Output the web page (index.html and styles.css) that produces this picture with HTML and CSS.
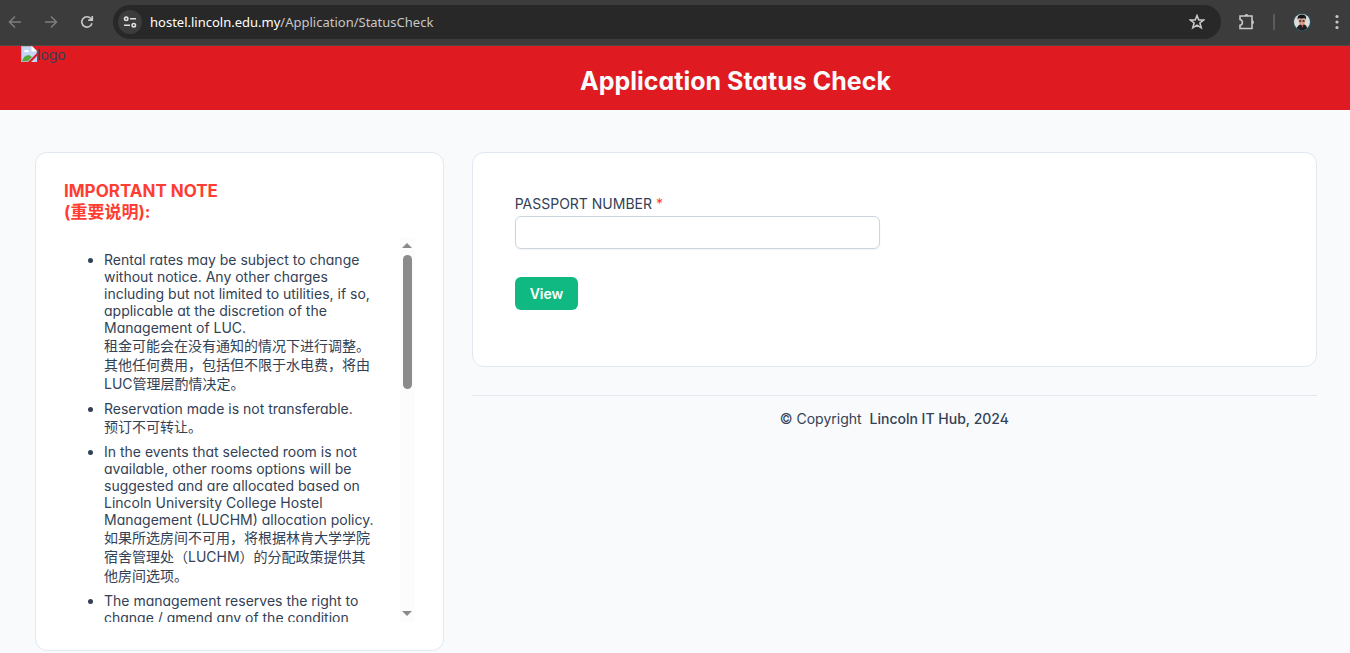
FILE: index.html
```
<!DOCTYPE html>
<html lang="en">
<head>
<meta charset="utf-8">
<title>Application Status Check</title>
<meta name="viewport" content="width=device-width, initial-scale=1">
<link rel="stylesheet" href="styles.css">
</head>
<body>

<!-- browser bar -->
<div class="browser">
  <button class="nav off" type="button" aria-label="Back">
    <svg width="16" height="16" viewBox="0 0 16 16"><path d="M14 8H3M8 2.5L2.5 8L8 13.5"/></svg>
  </button>
  <button class="nav off" type="button" aria-label="Forward">
    <svg width="16" height="16" viewBox="0 0 16 16"><path d="M2 8H13M8 2.5L13.5 8L8 13.5"/></svg>
  </button>
  <button class="nav" type="button" aria-label="Reload">
    <svg width="16" height="16" viewBox="0 0 16 16"><path d="M13 9.2A5.2 5.2 0 1 1 12 4.6L13 5.8M13.3 2V6.1H9.2"/></svg>
  </button>
  <div class="omnibox">
    <button class="site" type="button" aria-label="Site information">
      <svg width="14" height="14" viewBox="0 0 14 14"><circle cx="3.2" cy="3.8" r="1.7"/><path d="M7 3.8H13M1 10.2H7"/><circle cx="10.8" cy="10.2" r="1.7"/></svg>
    </button>
    <div class="url" role="textbox" contenteditable="true" spellcheck="false" aria-label="Address"><span class="host">hostel.lincoln.edu.my</span>/Application/StatusCheck</div>
    <button class="nav" type="button" aria-label="Bookmark">
      <svg width="16" height="16" viewBox="0 0 16 16"><path d="M8 1.6L9.8 6H14.6L10.9 9L12.2 13.8L8 11.1L3.8 13.8L5.1 9L1.4 6H6.2Z"/></svg>
    </button>
  </div>
  <div class="tools">
    <button class="nav" type="button" aria-label="Extensions">
      <svg width="18" height="18" viewBox="0 0 18 18"><path d="M2 3H14V15.500H2V12.300C5.200 11.800 5.200 7.200 2 6.500Z"/><path class="fill" d="M6.500 3A2 2 0 0 1 10.500 3ZM14 7.300A2 2 0 0 1 14 11.300Z"/></svg>
    </button>
    <span class="split"></span>
    <button class="nav" type="button" aria-label="Profile">
      <svg class="avatar" width="20" height="20" viewBox="0 0 20 20">
        <circle cx="10" cy="10" r="9.5" fill="#2f4a50"/>
        <circle cx="10" cy="10" r="8" fill="#dcdcdc"/>
        <path d="M4.500 16L7 13L9 12H11L13.500 13L15.500 16A8 8 0 0 1 4.500 16Z" fill="#1d1f26"/>
        <path d="M9 12H11.5L10.5 16Z" fill="#c1584a"/>
        <path d="M6.6 7H13.2V9.5Q12.6 13 10 13Q7.2 13 6.6 9.5Z" fill="#d99b83"/>
        <path d="M5.6 7.500Q4.8 3 9.6 2.5Q15 2.6 14 7.500L12.8 6.2L9 6.800L6.8 6.2Z" fill="#17151a"/>
        <path d="M7.3 9H9.2M10.6 9H12.5" stroke="#2b2022"/>
      </svg>
    </button>
    <button class="nav" type="button" aria-label="Menu">
      <svg width="16" height="16" viewBox="0 0 16 16"><g class="fill"><circle cx="8" cy="2.5" r="1.6"/><circle cx="8" cy="8" r="1.6"/><circle cx="8" cy="13.5" r="1.6"/></g></svg>
    </button>
  </div>
</div>

<header class="topbar">
  <div class="logo">
    <svg width="16" height="16" viewBox="0 0 16 16">
      <path d="M0 0H11L16 5V7L7 16H0Z" fill="#c4d5f5"/>
      <path d="M1 15Q3 9 8 9L11 11L7 15Z" fill="#55ab35"/>
      <path d="M3 6Q3 4 5 4Q7 3 8 6Z" fill="#fff"/>
      <path d="M7 15.5H.5V.5H11L15.5 5V7" fill="none" stroke="#b4b4b8"/>
      <path d="M10.5 0V5.5H16Z" fill="#fff"/>
      <path d="M16 10V16H10Z" fill="#c4d5f5"/>
    </svg><span>logo</span>
  </div>
  <h1>Application Status Check</h1>
</header>

<div class="layout">
  <aside class="card note">
    <h2>IMPORTANT NOTE<br>(重要说明):</h2>
    <div class="scroller">
      <ul>
        <li>Rental rates may be subject to change without notice. Any other charges including but not limited to utilities, if so, applicable at the discretion of the Management of LUC.
          <span class="cn" lang="zh">租金可能会在没有通知的情况下进行调整。其他任何费用，包括但不限于水电费，将由LUC管理层酌情决定。</span></li>
        <li>Reservation made is not transferable.
          <span class="cn" lang="zh">预订不可转让。</span></li>
        <li>In the events that selected room is not available, other rooms options will be suggested and are allocated based on Lincoln University College Hostel Management (LUCHM) allocation policy.
          <span class="cn" lang="zh">如果所选房间不可用，将根据林肯大学学院宿舍管理处（LUCHM）的分配政策提供其他房间选项。</span></li>
        <li>The management reserves the right to change / amend any of the condition</li>
      </ul>
      <div class="bar" aria-hidden="true">
        <span class="up"></span>
        <span class="thumb"></span>
        <span class="down"></span>
      </div>
    </div>
  </aside>

  <main>
    <form class="card form" onsubmit="return false">
      <div class="field">
        <label for="passport">PASSPORT NUMBER <span class="req">*</span></label>
        <input type="text" id="passport" name="passport">
      </div>
      <button class="btn" type="submit">View</button>
    </form>
    <footer>© Copyright <strong>Lincoln IT Hub, 2024</strong></footer>
  </main>
</div>

</body>
</html>
```
FILE: styles.css
```
* {
	box-sizing: border-box;
}

body {
	margin: 0;
	background: #f8fafc;
	color: #334155;
	font: 14px/17px Inter, "Noto Sans CJK SC", sans-serif;
	font-feature-settings: "cv02", "cv03", "cv04", "cv11";
}

button {
	border: 0;
	padding: 0;
	font: inherit;
	cursor: pointer;
}

/* browser bar */
.browser {
	display: flex;
	align-items: center;
	height: 46px;
	padding: 0 5px 2px 7px;
	background: #3c3c3c;
	border-bottom: 1px solid #4a4a4a;
}

.nav {
	display: flex;
	margin-right: 20px;
	background: none;
	color: #c7c7c7;
}

.nav svg, .site svg {
	fill: none;
	stroke: currentColor;
	stroke-width: 1.6;
}

.nav svg .fill {
	fill: currentColor;
	stroke: none;
}

.nav .avatar {
	stroke: none;
}

.off {
	color: #7c7c7c;
}

.omnibox {
	flex: 1;
	display: flex;
	align-items: center;
	height: 34px;
	margin-left: -2px;
	padding: 0 16px 0 5px;
	border-radius: 17px;
	background: #282828;
}

.omnibox .nav {
	margin: 0;
}

.site {
	display: flex;
	align-items: center;
	justify-content: center;
	width: 24px;
	height: 24px;
	margin-right: 8px;
	border-radius: 50%;
	background: #3c3c3c;
	color: #dedede;
}

.url {
	flex: 1;
	color: #c7c7c7;
	font: 13px/18px "Noto Sans", sans-serif;
	outline: none;
}

.host {
	color: #fff;
}

.tools {
	display: flex;
	align-items: center;
	gap: 17px;
	margin-left: 17px;
}

.tools .nav {
	margin: 0;
}

.split {
	width: 2px;
	height: 16px;
	background: #5c5c5c;
}

/* page header */
.topbar {
	display: flex;
	height: 64px;
	padding-left: 21px;
	background: #df1b21;
}

.logo {
	display: flex;
	width: 100px;
}

.topbar h1 {
	flex: 1;
	margin: 0;
	padding-top: 19px;
	color: #f8fafc;
	font-size: 25px;
	font-weight: 700;
	line-height: 32px;
	text-align: center;
}

.layout {
	display: grid;
	grid-template-columns: repeat(12, 1fr);
	gap: 28px;
	align-items: start;
	padding: 42px 33px 0 35px;
}

.card {
	border: 1px solid #e2e8f0;
	border-radius: 12px;
	background: #fff;
}

/* important note */
.note {
	grid-column: span 4;
	padding: 28px;
}

.note h2 {
	margin: 0 0 14px;
	color: #ff3d32;
	font-size: 17px;
	font-weight: 700;
	line-height: 21px;
}

.scroller {
	display: flex;
	height: 385px;
	overflow: hidden;
}

.scroller ul {
	flex: 1;
	margin: 14px 0;
	padding: 0 24px 0 40px;
}

.scroller li {
	margin-bottom: 7px;
}

.cn {
	display: block;
	line-height: 19px;
}

.bar {
	display: flex;
	flex-direction: column;
	align-items: center;
	width: 15px;
	padding: 6px 0;
	background: #fcfcfc;
}

.up, .down {
	border: 5px solid transparent;
}

.up {
	border-top: 0;
	border-bottom-color: #8b8b8b;
}

.down {
	margin-top: auto;
	border-bottom: 0;
	border-top-color: #8b8b8b;
}

.thumb {
	width: 9px;
	height: 134px;
	margin-top: 7px;
	border-radius: 5px;
	background: #8b8b8b;
}

/* status form */
main {
	grid-column: span 8;
}

.form {
	padding: 42px 42px 56px;
}

.field {
	display: flex;
	flex-direction: column;
	gap: 4px;
	width: calc(50% - 14px);
	margin-bottom: 28px;
}

.req {
	color: #ff3d32;
}

.field input {
	height: 33px;
	padding: 7px 10px;
	border: 1px solid #cbd5e1;
	border-radius: 6px;
	background: #fff;
	color: inherit;
	font: inherit;
	box-shadow: 0 1px 2px rgba(18, 18, 23, 0.05);
}

.btn {
	display: block;
	height: 33px;
	padding: 0 15px;
	border-radius: 6px;
	background: #10b981;
	color: #fff;
	font-weight: 600;
}

footer {
	margin-top: 28px;
	padding-top: 14px;
	border-top: 1px solid #e2e8f0;
	text-align: center;
}

footer strong {
	margin-left: 4px;
	font-weight: 500;
}
```
